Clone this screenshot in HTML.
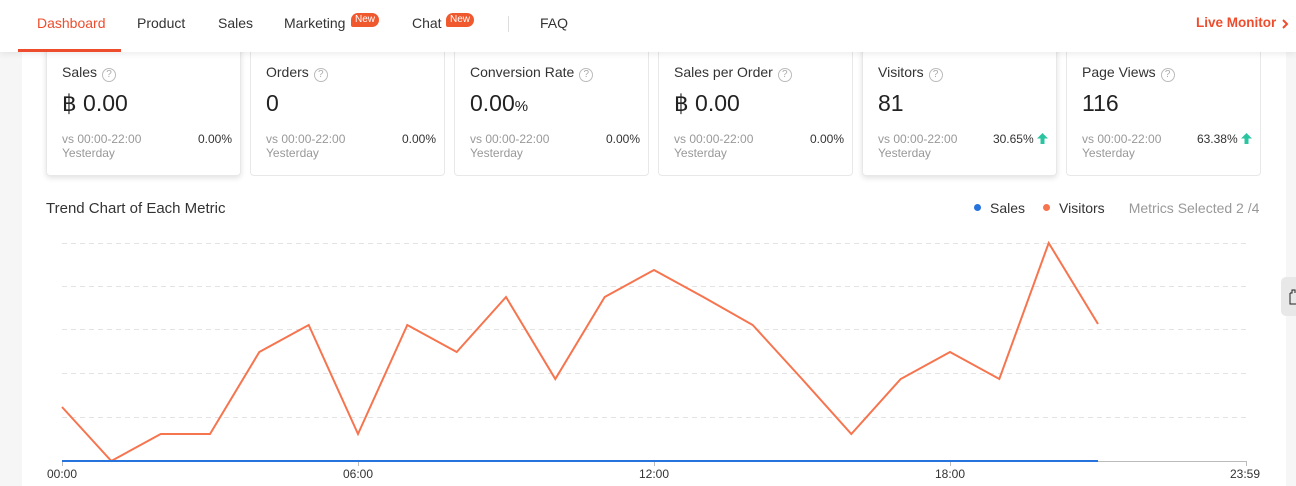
<!DOCTYPE html>
<html><head><meta charset="utf-8"><style>
*{margin:0;padding:0;box-sizing:border-box}
body{width:1296px;height:486px;overflow:hidden;background:#f6f6f6;font-family:"Liberation Sans",sans-serif;position:relative;color:#333}
.main{position:absolute;left:22px;top:0;width:1264px;height:486px;background:#fff}
.hdr{position:absolute;left:0;top:0;width:1296px;height:52px;background:#fff;box-shadow:0 2px 6px rgba(0,0,0,.08);z-index:5}
.tab{position:absolute;top:15px;font-size:14px;color:#333}
.act{color:#ee4d2d}
.ul{position:absolute;left:18px;top:49px;width:103px;height:3px;background:#ee4d2d}
.new{position:absolute;top:13px;background:#f0582e;color:#fff;font-size:10px;border-radius:7px 7px 7px 2px;padding:1px 4px;line-height:12px}
.card{position:absolute;top:40px;width:195px;height:136px;background:#fff;border:1px solid #e8e8e8;border-radius:4px}
.sh{box-shadow:0 2px 6px rgba(0,0,0,.12)}
.t{position:absolute;left:15px;top:23px;font-size:14px;color:#333}
.q{display:inline-block;width:14px;height:14px;border:1px solid #bbb;border-radius:50%;font-size:10px;color:#aaa;text-align:center;line-height:12px;margin-left:5px;vertical-align:0px}
.v{position:absolute;left:15px;top:49px;font-size:23px;color:#222}
.vs{position:absolute;left:15px;top:91px;font-size:12px;color:#999;line-height:14px}
.p{position:absolute;right:8px;top:91px;font-size:12px;color:#333}
</style></head><body>
<div class="main"></div>
<div class="hdr">
<span class="tab act" style="left:37px">Dashboard</span>
<div class="ul"></div>
<span class="tab" style="left:137px">Product</span>
<span class="tab" style="left:218px">Sales</span>
<span class="tab" style="left:284px">Marketing</span><span class="new" style="left:351px">New</span>
<span class="tab" style="left:412px">Chat</span><span class="new" style="left:446px">New</span>
<div style="position:absolute;left:508px;top:16px;width:1px;height:16px;background:#ddd"></div>
<span class="tab" style="left:540px">FAQ</span>
<span class="tab act" style="left:1196px;font-weight:bold;font-size:13.5px">Live Monitor</span>
<svg style="position:absolute;left:1281px;top:18px" width="8" height="12" viewBox="0 0 8 12"><path d="M2 2l4 4-4 4" stroke="#ee4d2d" stroke-width="2" fill="none"/></svg>
</div>

<div class="card sh" style="left:46px"><div class="t">Sales<span class="q">?</span></div><div class="v">&#3647; 0.00</div><div class="vs">vs 00:00-22:00<br>Yesterday</div><div class="p">0.00%</div></div>
<div class="card" style="left:250px"><div class="t">Orders<span class="q">?</span></div><div class="v">0</div><div class="vs">vs 00:00-22:00<br>Yesterday</div><div class="p">0.00%</div></div>
<div class="card" style="left:454px"><div class="t">Conversion Rate<span class="q">?</span></div><div class="v">0.00<span style="font-size:15px">%</span></div><div class="vs">vs 00:00-22:00<br>Yesterday</div><div class="p">0.00%</div></div>
<div class="card" style="left:658px"><div class="t">Sales per Order<span class="q">?</span></div><div class="v">&#3647; 0.00</div><div class="vs">vs 00:00-22:00<br>Yesterday</div><div class="p">0.00%</div></div>
<div class="card sh" style="left:862px"><div class="t">Visitors<span class="q">?</span></div><div class="v">81</div><div class="vs">vs 00:00-22:00<br>Yesterday</div><div class="p">30.65% <svg width="11" height="11" viewBox="0 0 11 11" style="vertical-align:-1px"><path d="M5.5 0L11 5.5H7.5V11h-4V5.5H0z" fill="#2bc4a0"/></svg></div></div>
<div class="card" style="left:1066px"><div class="t">Page Views<span class="q">?</span></div><div class="v">116</div><div class="vs">vs 00:00-22:00<br>Yesterday</div><div class="p">63.38% <svg width="11" height="11" viewBox="0 0 11 11" style="vertical-align:-1px"><path d="M5.5 0L11 5.5H7.5V11h-4V5.5H0z" fill="#2bc4a0"/></svg></div></div>

<div style="position:absolute;left:46px;top:200px;font-size:15px;color:#333">Trend Chart of Each Metric</div>
<div style="position:absolute;left:974px;top:200px;font-size:14px;color:#333"><span style="display:inline-block;width:7px;height:7px;border-radius:50%;background:#2673dd;margin-right:9px;vertical-align:2px"></span>Sales<span style="display:inline-block;width:7px;height:7px;border-radius:50%;background:#f6744e;margin:0 9px 0 18px;vertical-align:2px"></span>Visitors<span style="color:#999;margin-left:24px">Metrics Selected 2 /4</span></div>

<svg style="position:absolute;left:0;top:0" width="1296" height="486">
<g stroke="#e3e3e3" stroke-dasharray="5,4" stroke-width="1">
<line x1="62" y1="243.5" x2="1246" y2="243.5"/><line x1="62" y1="286.5" x2="1246" y2="286.5"/><line x1="62" y1="329.5" x2="1246" y2="329.5"/><line x1="62" y1="373.5" x2="1246" y2="373.5"/><line x1="62" y1="417.5" x2="1246" y2="417.5"/>
</g>
<line x1="62" y1="461.5" x2="1246" y2="461.5" stroke="#bbb"/>
<g stroke="#bbb"><line x1="62.5" y1="461" x2="62.5" y2="466"/><line x1="358.5" y1="461" x2="358.5" y2="466"/><line x1="654.5" y1="461" x2="654.5" y2="466"/><line x1="950.5" y1="461" x2="950.5" y2="466"/><line x1="1246.5" y1="461" x2="1246.5" y2="466"/></g>
<polyline fill="none" stroke="#f6744e" stroke-width="2" points="62,407 111.3,461 160.7,434 210,434 259.3,352 308.7,325 358,434 407.3,325 456.7,352 506,297 555.3,379 604.7,297 654,270 703.3,297 752.7,325 802,379 851.3,434 900.7,379 950,352 999.3,379 1048.7,243 1098,324"/>
<line x1="62" y1="461" x2="1098" y2="461" stroke="#2673dd" stroke-width="2"/>
<g font-family="Liberation Sans" font-size="12" fill="#333" text-anchor="middle">
<text x="62" y="478">00:00</text><text x="358" y="478">06:00</text><text x="654" y="478">12:00</text><text x="950" y="478">18:00</text><text x="1245" y="478">23:59</text></g>
</svg>
<div style="position:absolute;left:1281px;top:277px;width:20px;height:39px;background:#e8e8e8;border-radius:5px 0 0 5px"></div>
<svg style="position:absolute;left:1289px;top:287px" width="8" height="18"><path d="M1 6h2V3h3v3M1 6v11h7" stroke="#222" fill="none"/></svg>
</body></html>
